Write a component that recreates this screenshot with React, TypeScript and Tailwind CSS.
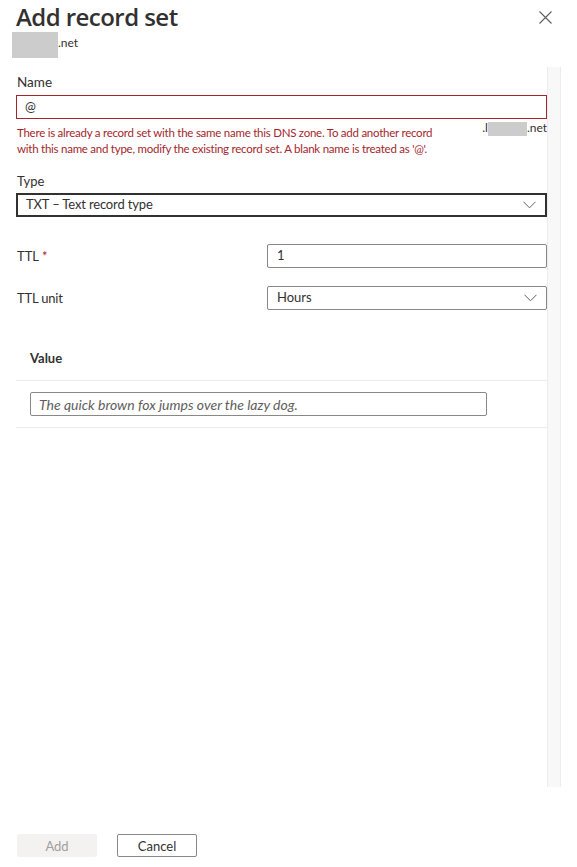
import React from "react";

const font = { fontFamily: 'Lato, "Open Sans", sans-serif' };
const titleFont = { fontFamily: '"Open Sans", "Noto Sans", sans-serif' };

function Chevron() {
  return (
    <svg width="13" height="8" viewBox="0 0 13 8" className="text-[#605e5c]">
      <path d="M0.5 0.8 L6.5 6.8 L12.5 0.8" fill="none" stroke="currentColor" strokeWidth="1" />
    </svg>
  );
}

export default function App() {
  return (
    <div className="w-[577px] h-[867px] bg-white text-[#323130] flex flex-col overflow-hidden" style={font}>
      {/* Header */}
      <div className="h-[67px] flex flex-col">
        <div className="flex items-start justify-between pl-[16px] pr-[25px]">
          <h1 className="text-[24px] leading-[32px] font-semibold tracking-[-0.55px] mt-[1px]" style={titleFont}>Add record set</h1>
          <svg width="13" height="13" viewBox="0 0 13 13" className="mt-[11px] text-[#605e5c]">
            <path d="M0.5 0.5 L12.5 12.5 M12.5 0.5 L0.5 12.5" fill="none" stroke="currentColor" strokeWidth="1.1" />
          </svg>
        </div>
        <div className="flex items-start pl-[12px] h-[26px] mt-[-1px]">
          <div className="w-[46px] h-[26px] bg-[#cccccc]" />
          <span className="text-[12px] leading-[16px] mt-[3px]">.net</span>
        </div>
      </div>

      {/* Scroll region */}
      <div className="h-[720px] flex">
        <div className="flex-1 pl-[16px] flex flex-col">
          {/* Name */}
          <div className="text-[13.5px] leading-[20px] pt-[5px] pl-[1px]">Name</div>
          <div className="mt-[3px] h-[24px] border border-[#a4262c] flex items-center px-[8px] text-[13px]">@</div>
          <div className="flex justify-between mt-[6px]">
            <p className="text-[11.5px] leading-[16px] text-[#a4262c] whitespace-nowrap tracking-[-0.25px] pl-[1px]">
              There is already a record set with the same name this DNS zone. To add another record
              <br />
              with this name and type, modify the existing record set. A blank name is treated as '@'.
            </p>
            <div className="flex items-start text-[12px] leading-[16px] mt-[-5px]">
              <span>.l</span>
              <div className="w-[39px] h-[14px] bg-[#cccccc] mt-[2px]" />
              <span>.net</span>
            </div>
          </div>

          {/* Type */}
          <div className="text-[13px] leading-[20px] mt-[14px] pl-[1px]">Type</div>
          <div className="mt-[2px] h-[24px] border-2 border-[#323130] flex items-center justify-between pl-[8px] pr-[9px] text-[13px] tracking-[-0.15px]">
            <span>TXT – Text record type</span>
            <Chevron />
          </div>

          {/* TTL */}
          <div className="mt-[27px] flex items-center">
            <div className="w-[251px] text-[13px] leading-[20px] pl-[1px]">
              TTL <span className="text-[#a4262c]">*</span>
            </div>
            <div className="flex-1 h-[24px] border border-[#8a8886] rounded-[2px] flex items-center px-[9px] text-[13px]">1</div>
          </div>

          {/* TTL unit */}
          <div className="mt-[18px] flex items-center">
            <div className="w-[251px] text-[13px] leading-[20px] pl-[1px] tracking-[-0.2px]">TTL unit</div>
            <div className="flex-1 h-[24px] border border-[#8a8886] rounded-[2px] flex items-center justify-between pl-[9px] pr-[9px] text-[13px]">
              <span>Hours</span>
              <Chevron />
            </div>
          </div>

          {/* Value grid */}
          <div className="mt-[38px] h-[33px] border-b border-[#edebe9] pl-[14px] text-[13px] font-bold leading-[20px]">
            Value
          </div>
          <div className="h-[47px] border-b border-[#edebe9] pl-[14px] pt-[11px]">
            <div className="w-[457px] h-[24px] border border-[#8a8886] rounded-[2px] flex items-center px-[8px] text-[14px] italic text-[#605e5c]">
              The quick brown fox jumps over the lazy dog.
            </div>
          </div>
        </div>
        <div className="w-[14px] mr-[16px] bg-[#f8f8f8] border-x border-[#ececec]" />
      </div>

      {/* Footer */}
      <div className="flex gap-[20px] pl-[17px] mt-[47px]">
        <button className="w-[80px] h-[23px] bg-[#f3f2f1] text-[#a19f9d] text-[13px] rounded-[2px] flex items-center justify-center pt-[2px]">Add</button>
        <button className="w-[80px] h-[23px] border border-[#8a8886] text-[#323130] text-[13px] rounded-[2px] flex items-center justify-center pt-[2px]">Cancel</button>
      </div>
    </div>
  );
}
